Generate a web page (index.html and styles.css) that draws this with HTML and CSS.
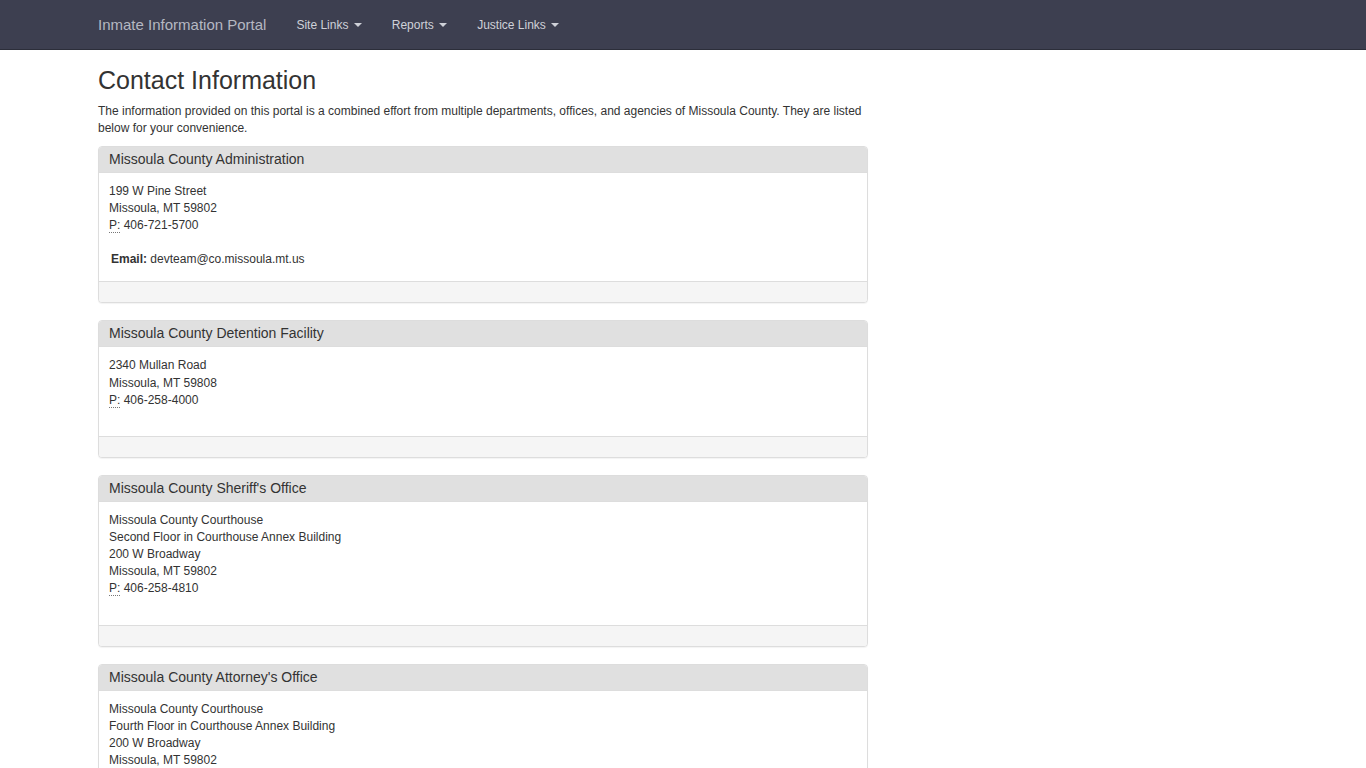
FILE: index.html
```html
<!DOCTYPE html>
<html lang="en">
<head>
    <meta charset="UTF-8">
    <meta name="viewport" content="width=device-width, initial-scale=1.0">
    <title>Contact Information - Inmate Information Portal</title>
    <link rel="stylesheet" href="styles.css">
</head>
<body>
    <nav class="navbar">
        <div class="container navbar-inner">
            <a class="navbar-brand" href="#">Inmate Information Portal</a>
            <ul class="nav">
                <li><a href="#">Site Links <span class="caret"></span></a></li>
                <li><a href="#">Reports <span class="caret"></span></a></li>
                <li><a href="#">Justice Links <span class="caret"></span></a></li>
            </ul>
        </div>
    </nav>

    <div class="container">
        <div class="content">
            <h1>Contact Information</h1>
            <p class="intro">The information provided on this portal is a combined effort from multiple departments, offices, and agencies of Missoula County. They are listed below for your convenience.</p>

            <div class="panel">
                <div class="panel-heading">Missoula County Administration</div>
                <div class="panel-body">
                    <address class="with-email">
                        199 W Pine Street<br>
                        Missoula, MT 59802<br>
                        <abbr title="Phone">P:</abbr> 406-721-5700<br>
                        <br>
                        <span class="email"><strong>Email:</strong> devteam@co.missoula.mt.us</span>
                    </address>
                </div>
                <div class="panel-footer"></div>
            </div>

            <div class="panel">
                <div class="panel-heading">Missoula County Detention Facility</div>
                <div class="panel-body">
                    <address>
                        2340 Mullan Road<br>
                        Missoula, MT 59808<br>
                        <abbr title="Phone">P:</abbr> 406-258-4000
                    </address>
                </div>
                <div class="panel-footer"></div>
            </div>

            <div class="panel">
                <div class="panel-heading">Missoula County Sheriff's Office</div>
                <div class="panel-body">
                    <address>
                        Missoula County Courthouse<br>
                        Second Floor in Courthouse Annex Building<br>
                        200 W Broadway<br>
                        Missoula, MT 59802<br>
                        <abbr title="Phone">P:</abbr> 406-258-4810
                    </address>
                </div>
                <div class="panel-footer"></div>
            </div>

            <div class="panel">
                <div class="panel-heading">Missoula County Attorney's Office</div>
                <div class="panel-body">
                    <address>
                        Missoula County Courthouse<br>
                        Fourth Floor in Courthouse Annex Building<br>
                        200 W Broadway<br>
                        Missoula, MT 59802<br>
                        <abbr title="Phone">P:</abbr> 406-258-4737
                    </address>
                </div>
                <div class="panel-footer"></div>
            </div>
        </div>
    </div>
</body>
</html>
```

FILE: styles.css
```css
/* styles.css */

body {
    margin: 0;
    font-family: "Liberation Sans", Arial, sans-serif;
    font-size: 12px;
    line-height: 1.42857;
    color: #333;
    background-color: #fff;
}

a {
    text-decoration: none;
}

.container {
    width: 1170px;
    margin: 0 auto;
}

/* navbar */

.navbar {
    height: 50px;
    background-color: #3d3f50;
    border-bottom: 1px solid #2c2e3a;
    box-sizing: border-box;
}

.navbar-inner {
    display: flex;
    align-items: center;
    height: 100%;
}

.navbar-brand {
    font-size: 15px;
    line-height: 20px;
    color: #b5b8c2;
    padding: 0 15px 0 0;
    margin-top: 1px;
}

.nav {
    display: flex;
    list-style: none;
    margin: 0;
    padding: 0;
}

.nav li a {
    display: block;
    padding: 0 15px;
    font-size: 12px;
    line-height: 20px;
    color: #cfd1d8;
}

.caret {
    display: inline-block;
    width: 0;
    height: 0;
    margin-left: 2px;
    vertical-align: middle;
    border-top: 4px solid;
    border-right: 4px solid transparent;
    border-left: 4px solid transparent;
}

/* content */

.content {
    width: 770px;
}

h1 {
    font-size: 25px;
    font-weight: normal;
    line-height: 1.1;
    margin: 17px 0 8px;
    color: #333;
}

.intro {
    margin: 0 0 9px;
}

.panel {
    border: 1px solid #ddd;
    border-radius: 4px;
    background-color: #fff;
    box-shadow: 0 1px 1px rgba(0, 0, 0, 0.05);
    margin-bottom: 17px;
    overflow: hidden;
}

.panel-heading {
    background-color: #e0e0e0;
    border-bottom: 1px solid #ddd;
    padding: 4px 10px 5px;
    font-size: 14px;
    line-height: 16px;
    color: #333;
}

.panel-body {
    padding: 10px 10px 10px;
}

address {
    font-style: normal;
    margin: 0 0 17px;
}

address.with-email {
    margin-bottom: 3px;
}

.email {
    padding-left: 2px;
}

abbr[title] {
    text-decoration: none;
    border-bottom: 1px dotted #777;
    cursor: help;
}

.panel-footer {
    height: 20px;
    background-color: #f5f5f5;
    border-top: 1px solid #ddd;
}
```
